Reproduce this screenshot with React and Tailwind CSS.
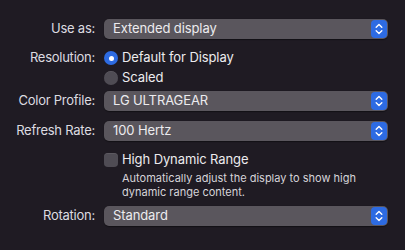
import React from 'react';

const Stepper = () => (
  <div className="absolute right-[1px] top-[1px] bottom-[1px] w-[16px] rounded-[4px] bg-[#2d6be2] flex items-center justify-center">
    <svg width="8" height="12" viewBox="0 0 8 12" fill="none" stroke="white" strokeWidth="1.4" strokeLinecap="round" strokeLinejoin="round">
      <path d="M1.2 4.3 L4 1.6 L6.8 4.3" />
      <path d="M1.2 7.7 L4 10.4 L6.8 7.7" />
    </svg>
  </div>
);

const Select = ({ value }) => (
  <div className="relative h-5 w-[284px] rounded-[5px] bg-[#5a565d] shadow-[0_0.5px_1px_rgba(0,0,0,0.4)] flex items-center pl-[9px] text-[13px] tracking-[-0.1px] text-[#ecebee]">
    {value}
    <Stepper />
  </div>
);

const Row = ({ label, className = '', children }) => (
  <div className={`flex items-center ${className}`}>
    <div className="w-[96px] pr-[1px] text-right text-[13px] tracking-[-0.25px] text-[#dddbe0] shrink-0">{label}</div>
    <div className="ml-[8px]">{children}</div>
  </div>
);

const Radio = ({ checked, label }) => (
  <div className="flex items-center h-5">
    {checked ? (
      <div className="w-[14px] h-[14px] rounded-full bg-[#2d6be2] flex items-center justify-center">
        <div className="w-[5px] h-[5px] rounded-full bg-white" />
      </div>
    ) : (
      <div className="w-[14px] h-[14px] rounded-full bg-[#4f4c54] shadow-[inset_0_0.5px_0_rgba(255,255,255,0.15)]" />
    )}
    <span className="ml-[4px] text-[13px] tracking-[-0.1px] text-[#ecebee]">{label}</span>
  </div>
);

export default function App() {
  return (
    <div
      className="w-[405px] h-[250px] bg-[#1f1b23] pt-[19px] overflow-hidden"
      style={{ fontFamily: 'Inter, "Noto Sans", sans-serif' }}
    >
      <Row label="Use as:">
        <Select value="Extended display" />
      </Row>

      <Row label="Resolution:" className="mt-[9px]">
        <Radio checked label="Default for Display" />
      </Row>
      <div className="ml-[104px]">
        <Radio label="Scaled" />
      </div>

      <Row label="Color Profile:" className="mt-[3px]">
        <Select value="LG ULTRAGEAR" />
      </Row>

      <Row label="Refresh Rate:" className="mt-[10px]">
        <Select value="100 Hertz" />
      </Row>

      <div className="ml-[104px] mt-[9px] flex items-center h-5">
        <div className="w-[14px] h-[14px] rounded-[4px] bg-[#4f4c54] shadow-[inset_0_0.5px_0_rgba(255,255,255,0.15)]" />
        <span className="ml-[4px] text-[13px] tracking-[-0.1px] text-[#ecebee]">High Dynamic Range</span>
      </div>
      <div className="ml-[122px] mt-[1px] text-[11px] leading-[14px] text-[#d6d4d9]">
        <div>Automatically adjust the display to show high</div>
        <div>dynamic range content.</div>
      </div>

      <Row label="Rotation:" className="mt-[7px]">
        <Select value="Standard" />
      </Row>
    </div>
  );
}
